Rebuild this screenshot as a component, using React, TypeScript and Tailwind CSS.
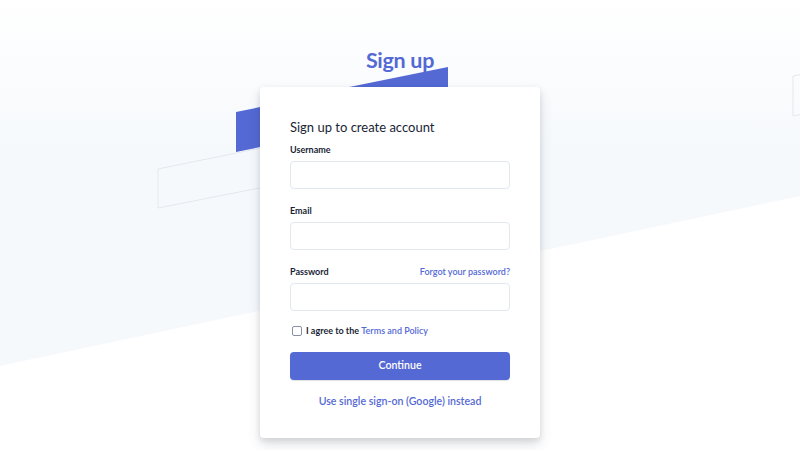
const Backdrop = () => (
  <svg
    className="absolute inset-0 h-full w-full"
    viewBox="0 0 800 450"
    preserveAspectRatio="none"
  >
    <defs>
      <linearGradient id="sky" x1="0" y1="0" x2="0" y2="1">
        <stop offset="0" stopColor="#ffffff" />
        <stop offset="0.4" stopColor="#f6f9fc" />
        <stop offset="1" stopColor="#f6f9fc" />
      </linearGradient>
    </defs>
    <polygon points="0,0 800,0 800,196 0,366" fill="url(#sky)" />
    <polygon points="448,67 448,120 300,150 300,97" fill="#5469d4" />
    <polygon points="236,112 290,101 290,141 236,152" fill="#5469d4" />
    <polygon
      points="158,169 300,140 300,180 158,208"
      fill="none"
      stroke="#e3e8ee"
      strokeWidth="1"
    />
    <polygon
      points="793,76 830,69 830,109 793,116"
      fill="none"
      stroke="#e3e8ee"
      strokeWidth="1"
    />
  </svg>
);

const Field = ({ label, extra }: { label: string; extra?: string }) => (
  <div className="flex flex-col">
    <div className="flex items-center justify-between h-[14px]">
      <span className="text-[9px] font-bold text-[#1a1f36]">{label}</span>
      {extra && (
        <span className="text-[9px] font-semibold text-[#5469d4]">{extra}</span>
      )}
    </div>
    <div className="mt-[4px] h-[28px] rounded-[4px] border border-[#e3e8ee] bg-white" />
  </div>
);

const App = () => {
  return (
    <div
      className="relative h-[450px] w-full overflow-hidden bg-white"
      style={{ fontFamily: 'Lato, "Noto Sans", sans-serif' }}
    >
      <Backdrop />

      <div className="relative flex flex-col items-center pt-[45px]">
        {/* Title */}
        <h1 className="h-[30px] text-[21.5px] font-bold leading-[30px] tracking-[-0.3px] text-[#5469d4]">
          Sign up
        </h1>

        {/* Card */}
        <div className="mt-[12px] flex h-[351px] w-[280px] flex-col rounded-[4px] bg-white px-[30px] pt-[30px] shadow-[0_7px_14px_rgba(60,66,87,0.12),0_3px_6px_rgba(0,0,0,0.12)]">
          <h2 className="h-[20px] text-[13px] leading-[20px] text-[#1a1f36]">
            Sign up to create account
          </h2>

          <div className="mt-[6px] flex flex-col gap-[15px]">
            <Field label="Username" />
            <Field label="Email" />
            <Field label="Password" extra="Forgot your password?" />
          </div>

          <label className="mt-[14px] flex h-[12px] items-center gap-[4px] pl-[2px]">
            <span className="h-[10px] w-[10px] rounded-[2px] border border-[#8792a2] bg-white" />
            <span className="text-[9px] font-bold text-[#1a1f36]">
              I agree to the{" "}
              <span className="font-semibold text-[#5469d4]">Terms and Policy</span>
            </span>
          </label>

          <button className="mt-[15px] h-[28px] w-full rounded-[4px] bg-[#5469d4] text-[10.6px] font-semibold text-white shadow-[0_1px_1px_rgba(0,0,0,0.12)]">
            Continue
          </button>

          <div className="mt-[14px] text-center text-[10.6px] font-semibold text-[#5469d4]">
            Use single sign-on (Google) instead
          </div>
        </div>
      </div>
    </div>
  );
};

export default App;
